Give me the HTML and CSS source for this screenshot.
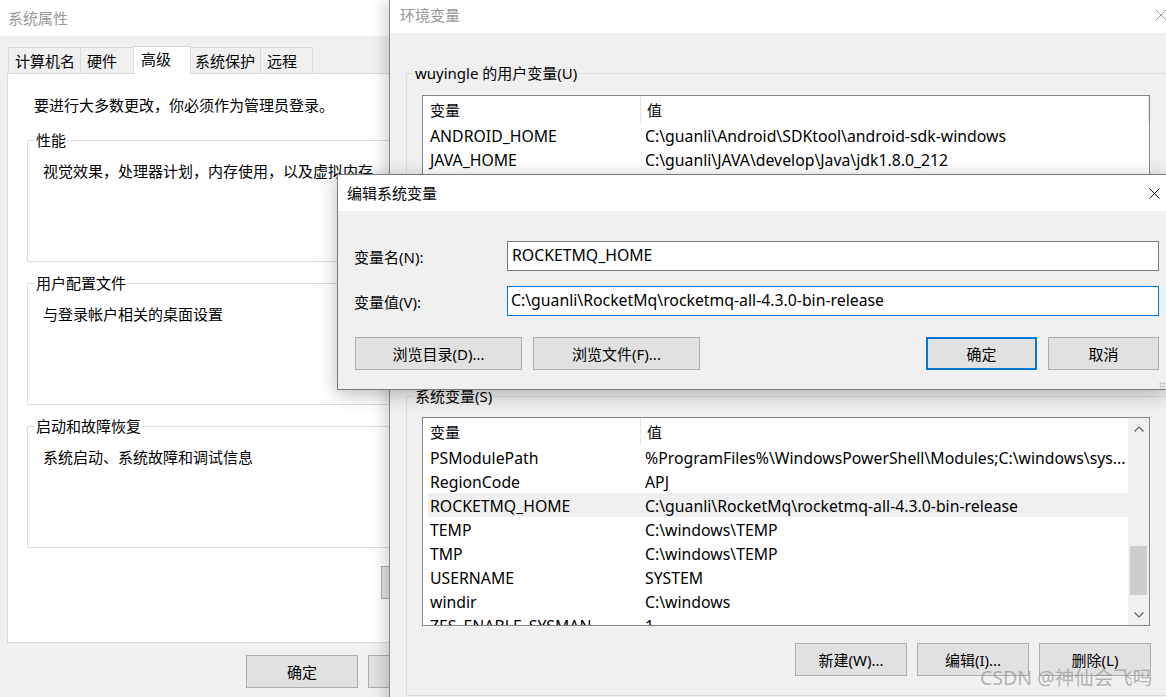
FILE: index.html
```html
<!DOCTYPE html>
<html lang="zh-CN">
<head>
<meta charset="utf-8">
<title>环境变量</title>
<link rel="stylesheet" href="styles.css">
</head>
<body>
<section class="win sysprop">
  <header class="titlebar"><span class="title">系统属性</span></header>
  <div class="sys-body">
    <div class="tabs">
      <div class="tab t1">计算机名</div>
      <div class="tab t2">硬件</div>
      <div class="tab t3 active">高级</div>
      <div class="tab t4">系统保护</div>
      <div class="tab t5">远程</div>
    </div>
    <div class="tab-panel">
      <p class="intro">要进行大多数更改，你必须作为管理员登录。</p>
      <div class="group">
        <span class="legend">性能</span>
        <p class="group-text">视觉效果，处理器计划，内存使用，以及虚拟内存</p>
      </div>
      <div class="group">
        <span class="legend">用户配置文件</span>
        <p class="group-text">与登录帐户相关的桌面设置</p>
      </div>
      <div class="group">
        <span class="legend">启动和故障恢复</span>
        <p class="group-text">系统启动、系统故障和调试信息</p>
      </div>
      <div class="panel-btn-row"><button class="btn btn-env" aria-label="环境变量(N)..."></button></div>
    </div>
    <div class="sys-buttons">
      <button class="btn btn-std">确定</button>
      <button class="btn btn-std" aria-label="取消"></button>
    </div>
  </div>
</section>

<section class="win envwin">
  <header class="titlebar env-title">
    <span class="title">环境变量</span>
    <svg class="close-x inactive" width="12" height="12" viewBox="0 0 12 12"><path d="M0.5 0.5 L11.5 11.5 M11.5 0.5 L0.5 11.5" stroke="#999" stroke-width="1" fill="none"/></svg>
  </header>
  <div class="env-body">
    <div class="egroup user-group">
      <span class="elegend">wuyingle 的用户变量(U)</span>
      <div class="listview lv-user">
        <div class="lv-content">
          <div class="lv-head">
            <div class="h1">变量</div>
            <div class="h2">值</div>
          </div>
          <div class="row"><span class="c1">ANDROID_HOME</span><span class="c2">C:\guanli\Android\SDKtool\android-sdk-windows</span></div>
          <div class="row"><span class="c1">JAVA_HOME</span><span class="c2">C:\guanli\JAVA\develop\Java\jdk1.8.0_212</span></div>
        </div>
      </div>
    </div>
    <div class="egroup sys-group">
      <span class="elegend">系统变量(S)</span>
      <div class="listview lv-sys">
        <div class="lv-content">
          <div class="lv-head">
            <div class="h1">变量</div>
            <div class="h2">值</div>
          </div>
          <div class="row"><span class="c1">PSModulePath</span><span class="c2">%ProgramFiles%\WindowsPowerShell\Modules;C:\windows\sys...</span></div>
          <div class="row"><span class="c1">RegionCode</span><span class="c2">APJ</span></div>
          <div class="row selected"><span class="c1">ROCKETMQ_HOME</span><span class="c2">C:\guanli\RocketMq\rocketmq-all-4.3.0-bin-release</span></div>
          <div class="row"><span class="c1">TEMP</span><span class="c2">C:\windows\TEMP</span></div>
          <div class="row"><span class="c1">TMP</span><span class="c2">C:\windows\TEMP</span></div>
          <div class="row"><span class="c1">USERNAME</span><span class="c2">SYSTEM</span></div>
          <div class="row"><span class="c1">windir</span><span class="c2">C:\windows</span></div>
          <div class="row"><span class="c1">ZES_ENABLE_SYSMAN</span><span class="c2">1</span></div>
        </div>
        <div class="scrollbar">
          <div class="sb-btn">
            <svg width="10" height="6" viewBox="0 0 10 6"><path d="M0.5 5.5 L5 1 L9.5 5.5" stroke="#606060" stroke-width="1.2" fill="none"/></svg>
          </div>
          <div class="sb-track"><div class="sb-thumb"></div></div>
          <div class="sb-btn">
            <svg width="10" height="6" viewBox="0 0 10 6"><path d="M0.5 0.5 L5 5 L9.5 0.5" stroke="#606060" stroke-width="1.2" fill="none"/></svg>
          </div>
        </div>
      </div>
      <div class="env-buttons">
        <button class="btn btn-env-act">新建(W)...</button>
        <button class="btn btn-env-act">编辑(I)...</button>
        <button class="btn btn-env-act">删除(L)</button>
      </div>
    </div>
  </div>
</section>

<section class="win dialog">
  <header class="titlebar dlg-title">
    <span class="title active-title">编辑系统变量</span>
    <svg class="close-x" width="12" height="12" viewBox="0 0 12 12"><path d="M0.5 0.5 L11.5 11.5 M11.5 0.5 L0.5 11.5" stroke="#000" stroke-width="1" fill="none"/></svg>
  </header>
  <div class="dlg-body">
    <div class="form">
      <label class="flabel">变量名(N):</label>
      <div class="field">ROCKETMQ_HOME</div>
      <label class="flabel">变量值(V):</label>
      <div class="field focused">C:\guanli\RocketMq\rocketmq-all-4.3.0-bin-release</div>
    </div>
    <div class="dlg-buttons">
      <button class="btn btn-browse">浏览目录(D)...</button>
      <button class="btn btn-browse">浏览文件(F)...</button>
      <button class="btn btn-dlg default">确定</button>
      <button class="btn btn-dlg">取消</button>
    </div>
  </div>
  <div class="grip"></div>
</section>

<div class="watermark">CSDN @神仙会飞吗</div>
</body>
</html>
```

FILE: styles.css
```css
* { box-sizing: border-box; }
html, body { margin: 0; padding: 0; }
body {
  width: 1166px;
  height: 697px;
  overflow: hidden;
  position: relative;
  background: #f0f0f0;
  font-family: "Noto Sans", "Noto Sans CJK SC", sans-serif;
  font-size: 15px;
  color: #000;
}
p { margin: 0; }

.win {
  position: absolute;
  background: #f0f0f0;
  display: flex;
  flex-direction: column;
}
.titlebar {
  background: #fff;
  display: flex;
  align-items: center;
  flex: none;
}
.title { color: #999; line-height: 20px; white-space: nowrap; }
.active-title { color: #000; }

.btn {
  font-family: inherit;
  font-size: 15px;
  color: #000;
  background: #e1e1e1;
  border: 1px solid #adadad;
  height: 33px;
  padding: 0;
  line-height: 20px;
  flex: none;
}

/* ---------- 系统属性 ---------- */
.sysprop { left: 0; top: 0; width: 480px; height: 697px; }
.sysprop .titlebar { height: 36px; padding-left: 8px; padding-bottom: 1px; }
.sys-body { padding: 10px 0 0 7px; }
.tabs {
  display: flex;
  align-items: flex-end;
  height: 27px;
  padding-left: 1px;
}
.tab {
  height: 26px;
  border: 1px solid #d9d9d9;
  border-bottom: none;
  background: #f0f0f0;
  padding: 3px 0 0 6px;
  line-height: 20px;
  margin-right: -1px;
  white-space: nowrap;
}
.t1 { width: 73px; }
.t2 { width: 54px; }
.t3 { width: 58px; }
.t4 { width: 71px; padding-left: 4px; }
.t5 { width: 53px; }
.tab.active {
  height: 28px;
  background: #fff;
  margin-bottom: -1px;
  padding: 2px 0 0 7px;
  position: relative;
  z-index: 1;
}
.tab-panel {
  width: 480px;
  height: 570px;
  background: #fff;
  border: 1px solid #d9d9d9;
  padding: 21px 0 0 19px;
}
.intro { margin-left: 7px; line-height: 20px; }
.group {
  width: 470px;
  height: 122px;
  margin-top: 21px;
  border: 1px solid #dcdcdc;
}
.intro + .group { margin-top: 25px; }
.legend {
  display: block;
  width: fit-content;
  margin: -11px 0 0 7px;
  padding: 0 1px;
  background: #fff;
  line-height: 20px;
}
.group-text { margin: 11px 0 0 15px; line-height: 20px; white-space: nowrap; }
.panel-btn-row { display: flex; margin: 18px 0 0 354px; }
.btn-env { width: 130px; }
.sys-buttons { display: flex; gap: 10px; margin: 12px 0 0 239px; }
.btn-std { width: 112px; }

/* ---------- 环境变量 ---------- */
.envwin {
  left: 389px;
  top: 0;
  width: 794px;
  height: 720px;
  border-left: 1px solid #8a8a8a;
  box-shadow: -4px 0 14px rgba(0, 0, 0, 0.18);
  z-index: 2;
}
.env-title { height: 33px; padding: 0 0 3px 10px; }
.close-x { margin-left: auto; flex: none; }
.env-title .close-x { margin-right: 16px; }
.env-body { padding: 0 16px; }
.egroup {
  border: 1px solid #dcdcdc;
}
.user-group { margin-top: 40px; height: 284px; }
.sys-group { margin-top: 39px; height: 300px; }
.elegend {
  display: block;
  width: fit-content;
  margin: -11px 0 0 7px;
  padding: 0 1px;
  background: #f0f0f0;
  line-height: 20px;
  white-space: nowrap;
}
.listview {
  display: flex;
  margin: 12px 16px 0 15px;
  background: #fff;
  border: 1px solid #828790;
  overflow: hidden;
}
.lv-user { height: 240px; }
.lv-sys { height: 209px; margin-top: 11px; }
.lv-content { flex: 1; padding-left: 5px; overflow: hidden; }
.lv-head { display: flex; height: 27px; line-height: 29px; }
.lv-head .h1 {
  width: 213px;
  padding-left: 2px;
  border-right: 1px solid #e5e5e5;
}
.lv-head .h2 {
  flex: 1;
  padding-left: 6px;
  border-right: 1px solid #e5e5e5;
}
.lv-sys .lv-head .h2 { border-right: none; }
.row {
  display: flex;
  height: 24px;
  line-height: 26px;
  font-size: 15.8px;
  white-space: nowrap;
}
.row .c1 { width: 217px; flex: none; padding-left: 2px; overflow: hidden; }
.row .c2 { flex: 1; overflow: hidden; }
.row.selected { background: #f0f0f0; }
.scrollbar {
  width: 21px;
  flex: none;
  background: #f0f0f0;
  display: flex;
  flex-direction: column;
}
.sb-btn { height: 21px; display: flex; align-items: center; justify-content: center; flex: none; }
.sb-track { flex: 1; padding: 107px 2px 0 2px; }
.sb-thumb { height: 49px; background: #cdcdcd; }
.env-buttons { display: flex; justify-content: flex-end; gap: 10px; margin: 17px 15px 0 0; }
.btn-env-act { width: 112px; }

/* ---------- 编辑系统变量 ---------- */
.dialog {
  left: 337px;
  top: 174px;
  width: 830px;
  height: 216px;
  border: 1px solid #7a7a7a;
  box-shadow: 0 4px 18px rgba(0, 0, 0, 0.28);
  z-index: 3;
}
.dlg-title { height: 36px; padding-left: 9px; }
.dlg-title .close-x { margin-right: 6px; width: 11px; height: 11px; }
.dlg-body { padding: 30px 7px 0 16px; }
.form {
  display: grid;
  grid-template-columns: 153px 1fr;
  row-gap: 15px;
  align-items: center;
}
.flabel { line-height: 20px; padding-top: 2px; }
.field {
  height: 30px;
  background: #fff;
  border: 1px solid #7a7a7a;
  line-height: 26px;
  font-size: 15.8px;
  padding-left: 4px;
  white-space: nowrap;
}
.field.focused { border-color: #0078d7; padding-left: 3px; }
.dlg-buttons { display: flex; margin-top: 21px; padding-left: 1px; }
.btn-browse { width: 167px; margin-right: 11px; }
.btn-dlg { width: 111px; }
.btn-dlg.default { margin-left: auto; margin-right: 11px; border: 2px solid #0078d7; }
.grip {
  position: absolute;
  right: 0;
  bottom: 0;
  width: 7px;
  height: 7px;
  background: radial-gradient(circle, #b5b5b5 0.8px, transparent 1.2px) 0 0 / 3px 3px;
}

.watermark {
  position: absolute;
  left: 980px;
  top: 665px;
  z-index: 5;
  font-size: 19.5px;
  line-height: 26px;
  color: rgba(150, 150, 150, 0.7);
  white-space: nowrap;
}
```
